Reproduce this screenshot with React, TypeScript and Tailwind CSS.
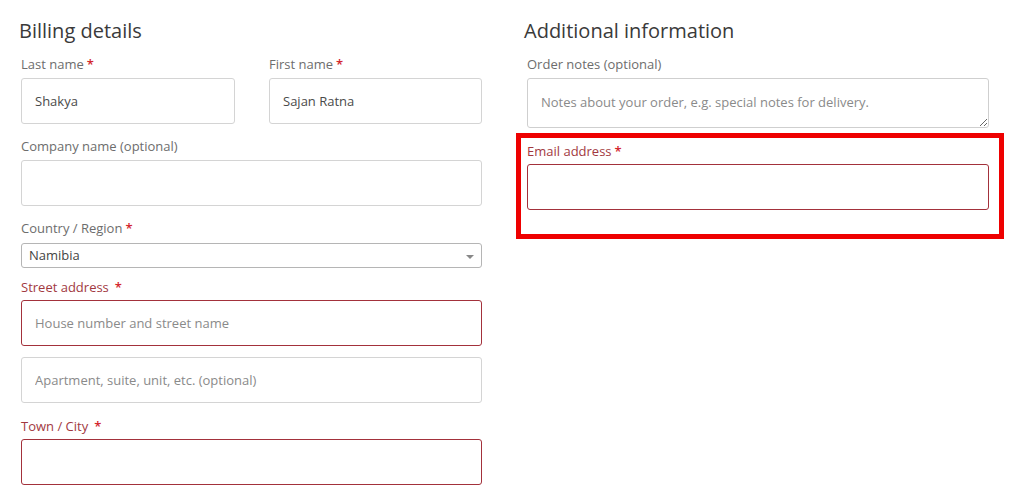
const labelCls = "block text-[13px] leading-[18px] text-[#6d6d6d]";
const errLabelCls = "block text-[13px] leading-[18px] text-[#a2393f]";
const inputCls =
  "block w-full h-[46px] rounded-[3px] border border-[#d4d4d4] bg-white px-[13px] text-[13px] text-[#4a4a4a] placeholder:text-[#8a8a8a] outline-none";
const errInputCls =
  "block w-full h-[46px] rounded-[3px] border border-[#a3313b] bg-white px-[13px] text-[13px] text-[#4a4a4a] placeholder:text-[#8a8a8a] outline-none";

function Req({ gap = false }: { gap?: boolean }) {
  return <span className={`text-[#d3262e] font-semibold ${gap ? "ml-[6px]" : "ml-[3px]"}`}>*</span>;
}

export default function App() {
  return (
    <div className="w-[1024px] h-[495px] bg-white overflow-hidden" style={{ fontFamily: '"Open Sans", "Liberation Sans", sans-serif' }}>
      <div className="flex gap-[45px] pl-[21px] pt-[17px]">
        {/* Billing details */}
        <section className="w-[461px]">
          <h2 className="-ml-[2px] text-[20px] leading-[28px] text-[#3a3a3a]">Billing details</h2>

          <div className="mt-[10px] flex gap-[34px]">
            <div className="w-[214px]">
              <label className={labelCls}>
                Last name
                <Req />
              </label>
              <input className={`${inputCls} mt-[5px]`} defaultValue="Shakya" />
            </div>
            <div className="w-[213px]">
              <label className={labelCls}>
                First name
                <Req />
              </label>
              <input className={`${inputCls} mt-[5px]`} defaultValue="Sajan Ratna" />
            </div>
          </div>

          <div className="mt-[13px]">
            <label className={labelCls}>Company name (optional)</label>
            <input className={`${inputCls} mt-[5px]`} />
          </div>

          <div className="mt-[13px]">
            <label className={labelCls}>
              Country / Region
              <Req />
            </label>
            <div className="relative mt-[6px] flex h-[25px] items-center rounded-[3px] border border-[#b5b5b5] px-[7px] text-[13px] text-[#444]">
              Namibia
              <span className="absolute right-[7px] top-[11px] h-0 w-0 border-x-[4px] border-t-[4px] border-x-transparent border-t-[#888]" />
            </div>
          </div>

          <div className="mt-[10px]">
            <label className={errLabelCls}>
              Street address
              <Req gap />
            </label>
            <input className={`${errInputCls} mt-[4px]`} placeholder="House number and street name" />
            <input className={`${inputCls} mt-[11px]`} placeholder="Apartment, suite, unit, etc. (optional)" />
          </div>

          <div className="mt-[14px]">
            <label className={errLabelCls}>
              Town / City
              <Req gap />
            </label>
            <input className={`${errInputCls} mt-[4px]`} />
          </div>
        </section>

        {/* Additional information */}
        <section className="w-[462px]">
          <h2 className="-ml-[3px] text-[20px] leading-[28px] text-[#3a3a3a]">Additional information</h2>

          <div className="mt-[10px]">
            <label className={labelCls}>Order notes (optional)</label>
            <textarea
              className="mt-[5px] block h-[50px] w-full rounded-[3px] border border-[#cfcfcf] px-[13px] pt-[14px] text-[13px] leading-[18px] text-[#4a4a4a] placeholder:text-[#8a8a8a] outline-none"
              placeholder="Notes about your order, e.g. special notes for delivery."
            />
          </div>

          <div className="-ml-[11px] mt-[5px] w-[488px] border-[5px] border-[#ee0000] pb-[24px] pl-[6px] pr-[10px] pt-[4px]">
            <label className={errLabelCls}>
              Email address
              <Req />
            </label>
            <input className={`${errInputCls} mt-[4px]`} />
          </div>
        </section>
      </div>
    </div>
  );
}
